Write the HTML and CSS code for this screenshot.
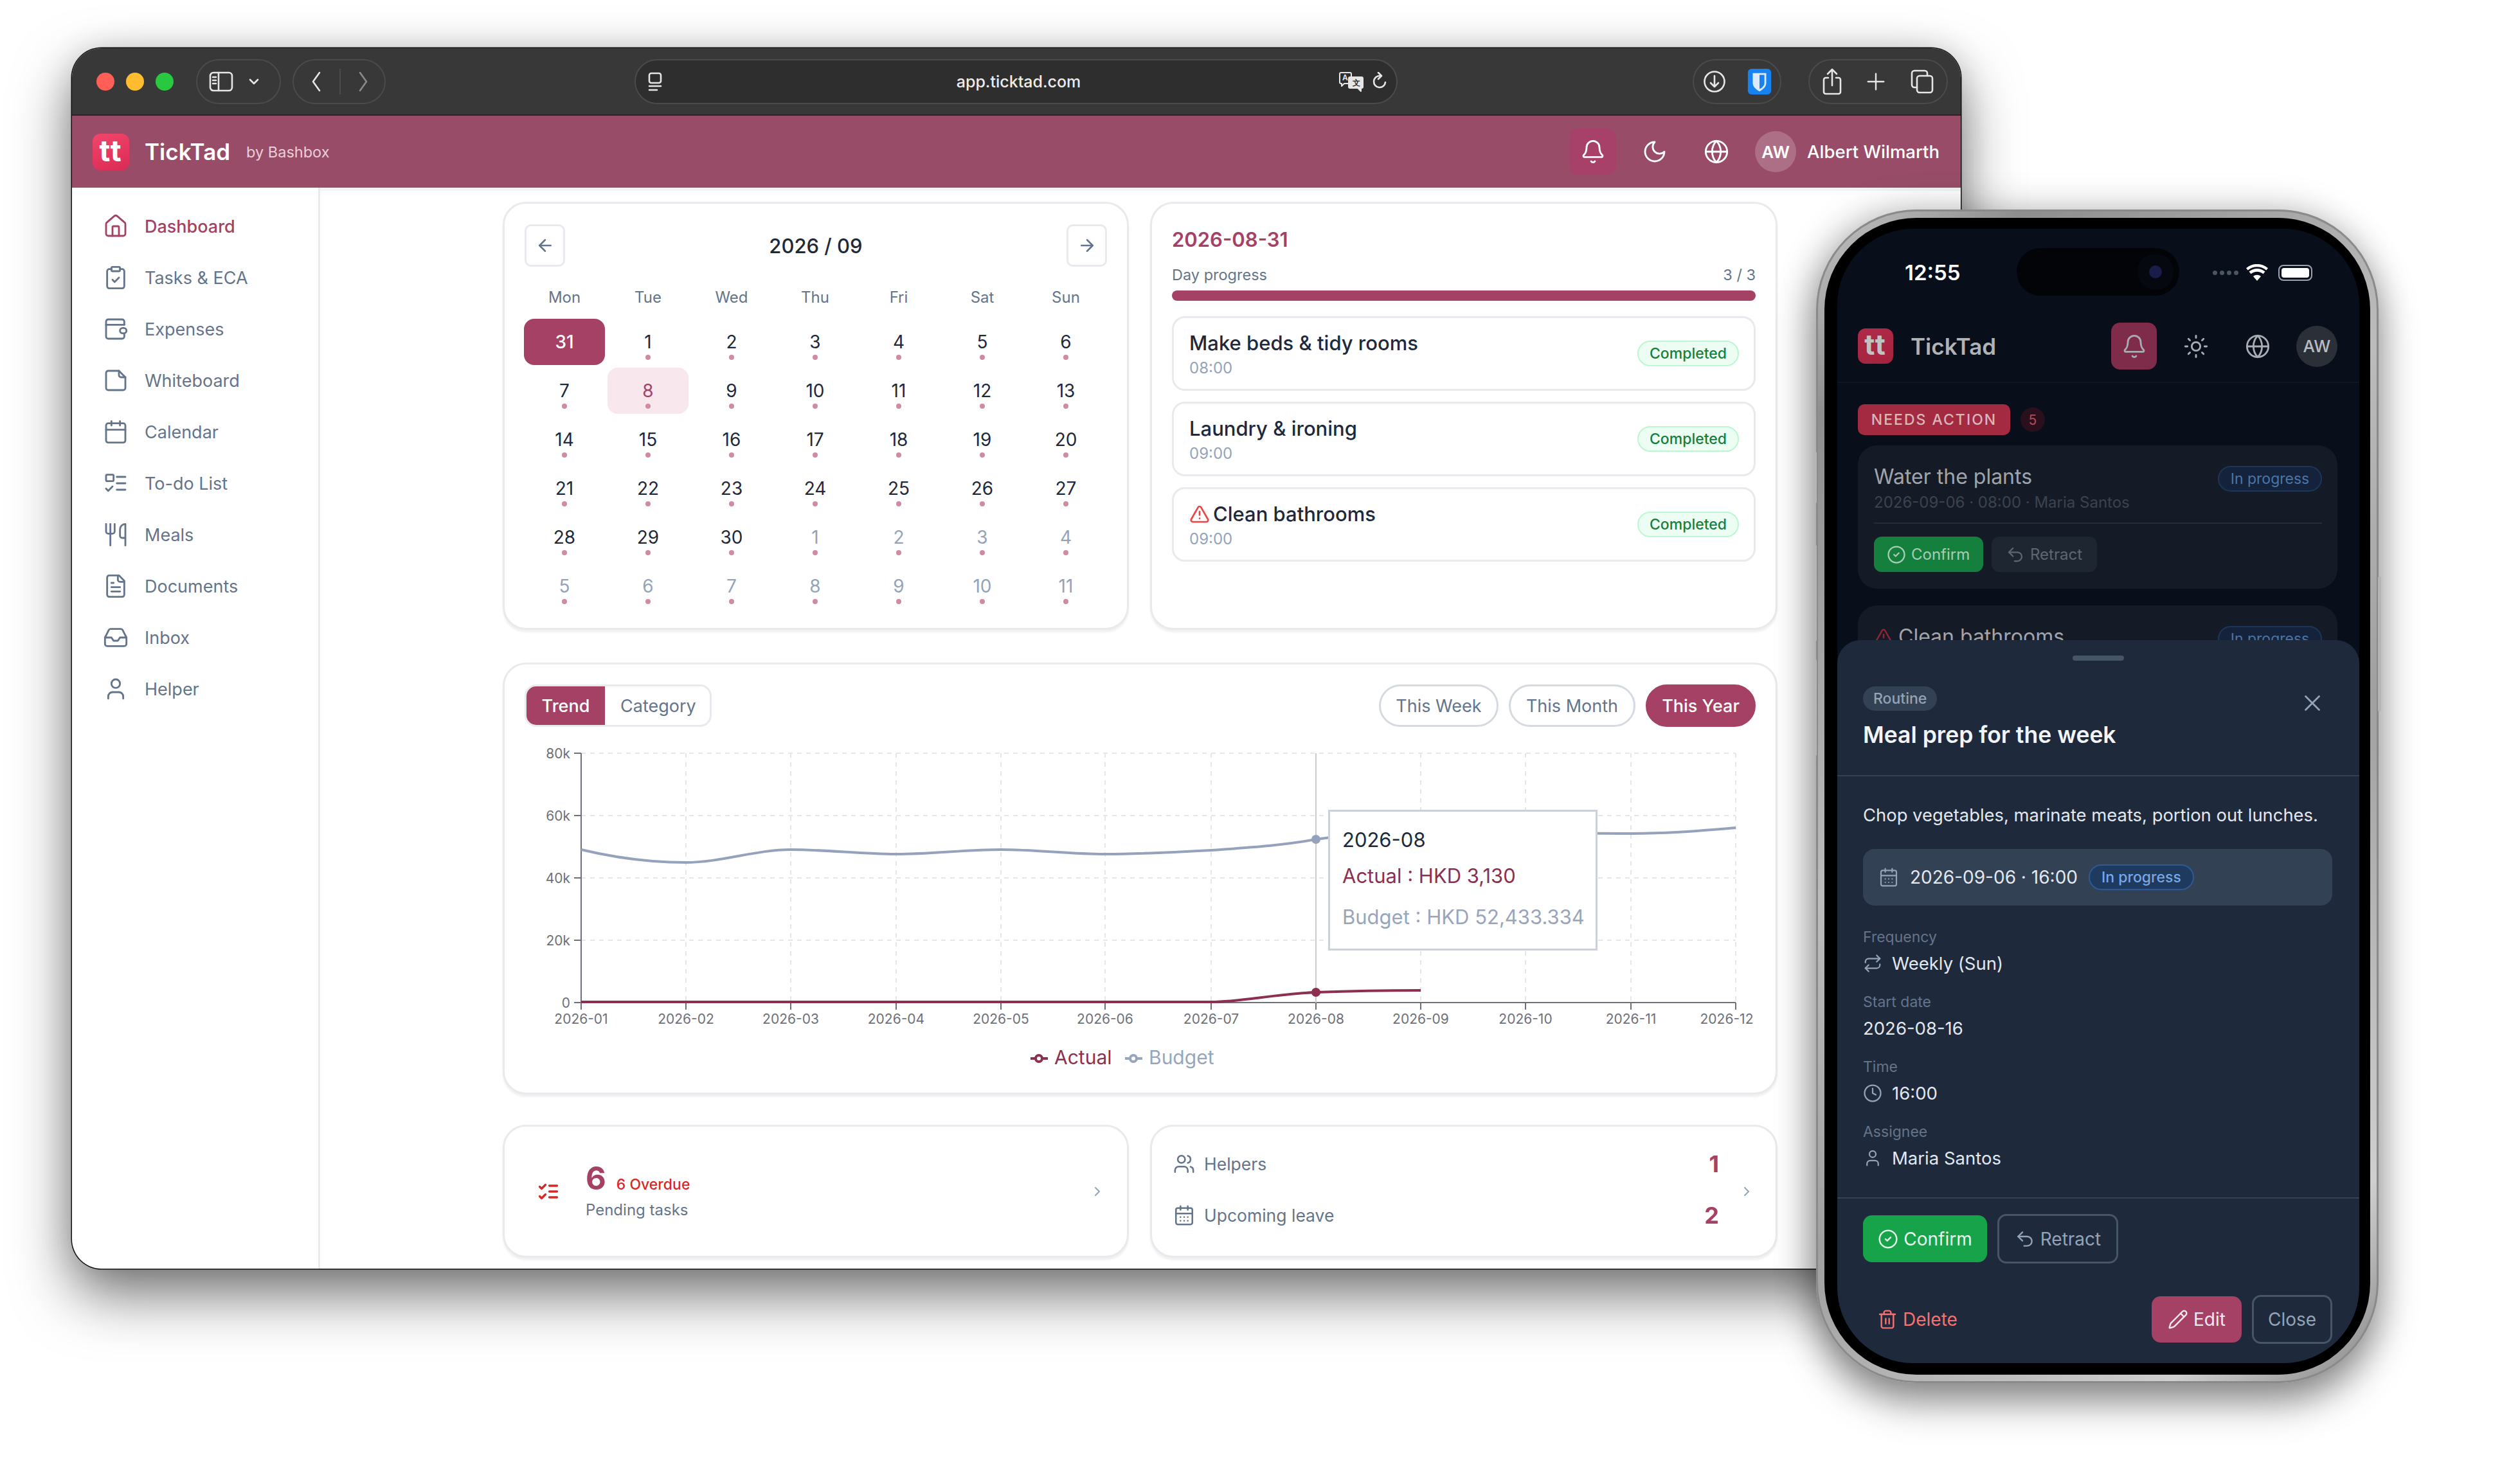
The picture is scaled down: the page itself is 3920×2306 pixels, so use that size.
FILE: index.html
```html
<!DOCTYPE html>
<html lang="en">

<head>
    <meta charset="utf-8">
    <title>TickTad</title>
    <link rel="stylesheet" href="styles.css">
</head>

<body>
    <svg class="sprite" xmlns="http://www.w3.org/2000/svg">
        <symbol id="i-home" viewBox="0 0 24 24"><path d="M15 21v-8a1 1 0 0 0-1-1h-4a1 1 0 0 0-1 1v8"/><path d="M3 10a2 2 0 0 1 .709-1.528l7-5.999a2 2 0 0 1 2.582 0l7 5.999A2 2 0 0 1 21 10v9a2 2 0 0 1-2 2H5a2 2 0 0 1-2-2z"/></symbol>
        <symbol id="i-clip" viewBox="0 0 24 24"><rect width="8" height="4" x="8" y="2" rx="1"/><path d="M16 4h2a2 2 0 0 1 2 2v14a2 2 0 0 1-2 2H6a2 2 0 0 1-2-2V6a2 2 0 0 1 2-2h2"/><path d="m9 14 2 2 4-4"/></symbol>
        <symbol id="i-wallet" viewBox="0 0 24 24"><path d="M20 8V5a2 2 0 0 0-2-2H5a2 2 0 0 0-2 2v14a2 2 0 0 0 2 2h13a2 2 0 0 0 2-2v-2"/><path d="M3 8h17"/><rect x="16" y="11" width="6" height="5" rx="2.5"/></symbol>
        <symbol id="i-file" viewBox="0 0 24 24"><path d="M15 3H5a2 2 0 0 0-2 2v14a2 2 0 0 0 2 2h14a2 2 0 0 0 2-2V9Z"/><path d="M15 3v4a2 2 0 0 0 2 2h4"/></symbol>
        <symbol id="i-cal" viewBox="0 0 24 24"><path d="M8 2v4"/><path d="M16 2v4"/><rect width="18" height="18" x="3" y="4" rx="2"/><path d="M3 10h18"/></symbol>
        <symbol id="i-caldays" viewBox="0 0 24 24"><path d="M8 2v4"/><path d="M16 2v4"/><rect width="18" height="18" x="3" y="4" rx="2"/><path d="M3 10h18"/><path d="M8 14h.01M12 14h.01M16 14h.01M8 18h.01M12 18h.01M16 18h.01"/></symbol>
        <symbol id="i-todo" viewBox="0 0 24 24"><rect x="3" y="4" width="7" height="6" rx="1"/><path d="m3 17 2 2 4-4"/><path d="M13 6h8"/><path d="M13 12h8"/><path d="M13 18h8"/></symbol>
        <symbol id="i-meals" viewBox="0 0 24 24"><path d="M3 2v7c0 1.1.9 2 2 2h4a2 2 0 0 0 2-2V2"/><path d="M7 2v20"/><path d="M21 15V2a5 5 0 0 0-5 5v6c0 1.1.9 2 2 2h3Zm0 0v7"/></symbol>
        <symbol id="i-doc" viewBox="0 0 24 24"><path d="M15 2H6a2 2 0 0 0-2 2v16a2 2 0 0 0 2 2h12a2 2 0 0 0 2-2V7Z"/><path d="M14 2v4a2 2 0 0 0 2 2h4"/><path d="M10 9H8"/><path d="M16 13H8"/><path d="M16 17H8"/></symbol>
        <symbol id="i-inbox" viewBox="0 0 24 24"><path d="M22 12h-6l-2 3h-4l-2-3H2"/><path d="M5.45 5.11 2 12v6a2 2 0 0 0 2 2h16a2 2 0 0 0 2-2v-6l-3.45-6.89A2 2 0 0 0 16.76 4H7.24a2 2 0 0 0-1.79 1.11z"/></symbol>
        <symbol id="i-user" viewBox="0 0 24 24"><path d="M19 21v-2a4 4 0 0 0-4-4H9a4 4 0 0 0-4 4v2"/><circle cx="12" cy="7" r="4"/></symbol>
        <symbol id="i-users" viewBox="0 0 24 24"><path d="M16 21v-2a4 4 0 0 0-4-4H6a4 4 0 0 0-4 4v2"/><circle cx="9" cy="7" r="4"/><path d="M22 21v-2a4 4 0 0 0-3-3.87"/><path d="M16 3.13a4 4 0 0 1 0 7.75"/></symbol>
        <symbol id="i-bell" viewBox="0 0 24 24"><path d="M10.268 21a2 2 0 0 0 3.464 0"/><path d="M3.262 15.326A1 1 0 0 0 4 17h16a1 1 0 0 0 .74-1.673C19.41 13.956 18 12.499 18 8A6 6 0 0 0 6 8c0 4.499-1.411 5.956-2.738 7.326"/></symbol>
        <symbol id="i-moon" viewBox="0 0 24 24"><path d="M12 3a6 6 0 0 0 9 9 9 9 0 1 1-9-9Z"/></symbol>
        <symbol id="i-globe" viewBox="0 0 24 24"><circle cx="12" cy="12" r="10"/><path d="M12 2a14.5 14.5 0 0 0 0 20 14.5 14.5 0 0 0 0-20"/><path d="M2 12h20"/></symbol>
        <symbol id="i-sun" viewBox="0 0 24 24"><circle cx="12" cy="12" r="4"/><path d="M12 2v2M12 20v2M4.93 4.93l1.41 1.41M17.66 17.66l1.41 1.41M2 12h2M20 12h2M6.34 17.66l-1.41 1.41M19.07 4.93l-1.41 1.41"/></symbol>
        <symbol id="i-left" viewBox="0 0 24 24"><path d="m12 19-7-7 7-7"/><path d="M19 12H5"/></symbol>
        <symbol id="i-right" viewBox="0 0 24 24"><path d="M5 12h14"/><path d="m12 5 7 7-7 7"/></symbol>
        <symbol id="i-chev" viewBox="0 0 24 24"><path d="m9 18 6-6-6-6"/></symbol>
        <symbol id="i-check" viewBox="0 0 24 24"><circle cx="12" cy="12" r="10"/><path d="m9 12 2 2 4-4"/></symbol>
        <symbol id="i-undo" viewBox="0 0 24 24"><path d="M9 14 4 9l5-5"/><path d="M4 9h10.5a5.5 5.5 0 0 1 0 11H11"/></symbol>
        <symbol id="i-repeat" viewBox="0 0 24 24"><path d="m17 2 4 4-4 4"/><path d="M3 11v-1a4 4 0 0 1 4-4h14"/><path d="m7 22-4-4 4-4"/><path d="M21 13v1a4 4 0 0 1-4 4H3"/></symbol>
        <symbol id="i-clock" viewBox="0 0 24 24"><circle cx="12" cy="12" r="10"/><path d="M12 6v6l4 2"/></symbol>
        <symbol id="i-trash" viewBox="0 0 24 24"><path d="M3 6h18"/><path d="M19 6v14c0 1-1 2-2 2H7c-1 0-2-1-2-2V6"/><path d="M8 6V4c0-1 1-2 2-2h4c1 0 2 1 2 2v2"/><path d="M10 11v6"/><path d="M14 11v6"/></symbol>
        <symbol id="i-pen" viewBox="0 0 24 24"><path d="M21.174 6.812a1 1 0 0 0-3.986-3.987L3.842 16.174a2 2 0 0 0-.5.83l-1.321 4.352a.5.5 0 0 0 .623.622l4.353-1.32a2 2 0 0 0 .83-.497z"/><path d="m15 5 4 4"/></symbol>
        <symbol id="i-x" viewBox="0 0 24 24"><path d="M18 6 6 18"/><path d="m6 6 12 12"/></symbol>
        <symbol id="i-warn" viewBox="0 0 24 24"><path d="m21.73 18-8-14a2 2 0 0 0-3.48 0l-8 14A2 2 0 0 0 4 21h16a2 2 0 0 0 1.73-3"/><path d="M12 9v4"/><path d="M12 17h.01"/></symbol>
        <symbol id="i-checks" viewBox="0 0 24 24"><path d="m3 17 2 2 4-4"/><path d="m3 7 2 2 4-4"/><path d="M13 6h8"/><path d="M13 12h8"/><path d="M13 18h8"/></symbol>
    </svg>

    <!-- browser window -->
    <div class="window">
        <div class="toolbar">
            <div class="lights"><i class="red"></i><i class="yellow"></i><i class="green"></i></div>
            <div class="tgroup tg-side">
                <svg class="tic" viewBox="0 0 38 32"><rect x="2" y="2" width="34" height="28" rx="5"/><path d="M15 2v28M6 9h5M6 14h5M6 19h5"/></svg>
                <svg class="tic-sm" viewBox="0 0 24 24"><path d="m6 9 6 6 6-6"/></svg>
            </div>
            <div class="tgroup tg-nav">
                <svg class="tic-nav" viewBox="0 0 20 36"><path d="M15 4 5 18l10 14"/></svg>
                <span class="tsep"></span>
                <svg class="tic-nav dim" viewBox="0 0 20 36"><path d="m5 4 10 14L5 32"/></svg>
            </div>
            <div class="urlbar">
                <svg class="url-page" viewBox="0 0 24 30"><rect x="3" y="2" width="18" height="15" rx="3"/><path d="M3 22h18M3 28h12"/></svg>
                <span class="url-text">app.ticktad.com</span>
                <div class="url-right">
                    <svg class="url-trans" viewBox="0 0 40 32"><path d="M4 2h14a2 2 0 0 1 2 2v13a2 2 0 0 1-2 2H9l-4 4v-4H4a2 2 0 0 1-2-2V4a2 2 0 0 1 2-2Z"/><path class="solid" d="M18 9h18a2 2 0 0 1 2 2v13a2 2 0 0 1-2 2h-1v5l-5-5H18a2 2 0 0 1-2-2V11a2 2 0 0 1 2-2Z"/><text x="6" y="14" class="trans-a">A</text><text x="22" y="22" class="trans-b">文</text></svg>
                    <svg class="url-reload" viewBox="0 0 24 30"><path d="M12 6a9 9 0 1 0 9 10"/><path d="m10 1 5 5-5 5"/></svg>
                </div>
            </div>
            <div class="tgroup tg-ext">
                <svg class="tic-dl" viewBox="0 0 36 36"><circle cx="18" cy="18" r="15.5"/><path d="M18 9v17M12 20l6 6 6-6"/></svg>
                <svg class="tic-bw" viewBox="0 0 38 42"><rect width="38" height="42" rx="6" fill="#1683f0"/><path d="M8 7h22v16c0 7-6 11-11 14-5-3-11-7-11-14Z" fill="#dbeafe"/><path d="M19 10h8v13c0 5-4 8-8 10Z" fill="#1683f0"/></svg>
            </div>
            <div class="tgroup tg-tabs">
                <svg class="tic-share" viewBox="0 0 32 42"><path d="M10 15H6a3 3 0 0 0-3 3v19a3 3 0 0 0 3 3h20a3 3 0 0 0 3-3V18a3 3 0 0 0-3-3h-4"/><path d="M16 27V3M9 9l7-7 7 7"/></svg>
                <svg class="tic-plus" viewBox="0 0 32 32"><path d="M16 3v26M3 16h26"/></svg>
                <svg class="tic-copy" viewBox="0 0 36 38"><rect x="10" y="10" width="24" height="26" rx="4"/><path d="M10 28H6a4 4 0 0 1-4-4V6a4 4 0 0 1 4-4h16a4 4 0 0 1 4 4v4"/></svg>
            </div>
        </div>

        <header class="appbar">
            <div class="logo">tt</div>
            <span class="brand">TickTad</span>
            <span class="by">by Bashbox</span>
            <div class="appbar-right">
                <span class="iconbtn bell-on"><svg class="ic"><use href="#i-bell"/></svg></span>
                <span class="iconbtn plain"><svg class="ic"><use href="#i-moon"/></svg></span>
                <span class="iconbtn plain"><svg class="ic"><use href="#i-globe"/></svg></span>
                <span class="avatar">AW</span>
                <span class="uname">Albert Wilmarth</span>
            </div>
        </header>

        <div class="app-body">
            <nav class="sidebar">
                <a class="navitem active"><svg class="ic"><use href="#i-home"/></svg>Dashboard</a>
                <a class="navitem"><svg class="ic"><use href="#i-clip"/></svg>Tasks &amp; ECA</a>
                <a class="navitem"><svg class="ic"><use href="#i-wallet"/></svg>Expenses</a>
                <a class="navitem"><svg class="ic"><use href="#i-file"/></svg>Whiteboard</a>
                <a class="navitem"><svg class="ic"><use href="#i-cal"/></svg>Calendar</a>
                <a class="navitem"><svg class="ic"><use href="#i-todo"/></svg>To-do List</a>
                <a class="navitem"><svg class="ic"><use href="#i-meals"/></svg>Meals</a>
                <a class="navitem"><svg class="ic"><use href="#i-doc"/></svg>Documents</a>
                <a class="navitem"><svg class="ic"><use href="#i-inbox"/></svg>Inbox</a>
                <a class="navitem"><svg class="ic"><use href="#i-user"/></svg>Helper</a>
            </nav>

            <main class="content">
                <div class="grid-row top-row">
                    <section class="card cal-card">
                        <div class="cal-head">
                            <button class="navbtn"><svg class="ic-sm"><use href="#i-left"/></svg></button>
                            <h2>2026 / 09</h2>
                            <button class="navbtn"><svg class="ic-sm"><use href="#i-right"/></svg></button>
                        </div>
                        <div class="weekdays">
                            <span>Mon</span><span>Tue</span><span>Wed</span><span>Thu</span><span>Fri</span><span>Sat</span><span>Sun</span>
                        </div>
                        <div class="days">
                            <div class="day selected"><b>31</b></div>
                            <div class="day"><b>1</b><i></i></div>
                            <div class="day"><b>2</b><i></i></div>
                            <div class="day"><b>3</b><i></i></div>
                            <div class="day"><b>4</b><i></i></div>
                            <div class="day"><b>5</b><i></i></div>
                            <div class="day"><b>6</b><i></i></div>
                            <div class="day"><b>7</b><i></i></div>
                            <div class="day today"><b>8</b><i></i></div>
                            <div class="day"><b>9</b><i></i></div>
                            <div class="day"><b>10</b><i></i></div>
                            <div class="day"><b>11</b><i></i></div>
                            <div class="day"><b>12</b><i></i></div>
                            <div class="day"><b>13</b><i></i></div>
                            <div class="day"><b>14</b><i></i></div>
                            <div class="day"><b>15</b><i></i></div>
                            <div class="day"><b>16</b><i></i></div>
                            <div class="day"><b>17</b><i></i></div>
                            <div class="day"><b>18</b><i></i></div>
                            <div class="day"><b>19</b><i></i></div>
                            <div class="day"><b>20</b><i></i></div>
                            <div class="day"><b>21</b><i></i></div>
                            <div class="day"><b>22</b><i></i></div>
                            <div class="day"><b>23</b><i></i></div>
                            <div class="day"><b>24</b><i></i></div>
                            <div class="day"><b>25</b><i></i></div>
                            <div class="day"><b>26</b><i></i></div>
                            <div class="day"><b>27</b><i></i></div>
                            <div class="day"><b>28</b><i></i></div>
                            <div class="day"><b>29</b><i></i></div>
                            <div class="day"><b>30</b><i></i></div>
                            <div class="day muted"><b>1</b><i></i></div>
                            <div class="day muted"><b>2</b><i></i></div>
                            <div class="day muted"><b>3</b><i></i></div>
                            <div class="day muted"><b>4</b><i></i></div>
                            <div class="day muted"><b>5</b><i></i></div>
                            <div class="day muted"><b>6</b><i></i></div>
                            <div class="day muted"><b>7</b><i></i></div>
                            <div class="day muted"><b>8</b><i></i></div>
                            <div class="day muted"><b>9</b><i></i></div>
                            <div class="day muted"><b>10</b><i></i></div>
                            <div class="day muted"><b>11</b><i></i></div>
                        </div>
                    </section>

                    <section class="card day-card">
                        <h3 class="day-date">2026-08-31</h3>
                        <div class="progress-label"><span>Day progress</span><span>3 / 3</span></div>
                        <div class="progress"></div>
                        <div class="task">
                            <div><p class="task-title">Make beds &amp; tidy rooms</p><p class="task-time">08:00</p></div>
                            <span class="pill-done">Completed</span>
                        </div>
                        <div class="task">
                            <div><p class="task-title">Laundry &amp; ironing</p><p class="task-time">09:00</p></div>
                            <span class="pill-done">Completed</span>
                        </div>
                        <div class="task">
                            <div><p class="task-title"><svg class="ic-warn"><use href="#i-warn"/></svg>Clean bathrooms</p><p class="task-time">09:00</p></div>
                            <span class="pill-done">Completed</span>
                        </div>
                    </section>
                </div>

                <section class="card chart-card">
                    <div class="chart-head">
                        <div class="segment"><span class="seg on">Trend</span><span class="seg">Category</span></div>
                        <div class="ranges">
                            <span class="range r-week">This Week</span>
                            <span class="range r-month">This Month</span>
                            <span class="range r-year on">This Year</span>
                        </div>
                    </div>
                    <div class="chart-wrap">
                        <svg class="chart" viewBox="816 1150 1915 520" width="1915" height="520">
                            <g class="gridlines">
                                <path d="M904 1172H2700M904 1269H2700M904 1366H2700M904 1463H2700"/>
                                <path d="M1067 1172V1560M1230 1172V1560M1394 1172V1560M1557 1172V1560M1719 1172V1560M1884 1172V1560M2210 1172V1560M2373 1172V1560M2537 1172V1560M2700 1172V1560"/>
                            </g>
                            <path class="axis" d="M904 1172V1560H2700M893 1172H904M893 1269H904M893 1366H904M893 1463H904M893 1560H904"/>
                            <path class="axis" d="M904 1560v11M1067 1560v11M1230 1560v11M1394 1560v11M1557 1560v11M1719 1560v11M1884 1560v11M2047 1560v11M2210 1560v11M2373 1560v11M2537 1560v11M2700 1560v11"/>
                            <g class="ylabels">
                                <text x="887" y="1172">80k</text>
                                <text x="887" y="1269">60k</text>
                                <text x="887" y="1366">40k</text>
                                <text x="887" y="1463">20k</text>
                                <text x="887" y="1560">0</text>
                            </g>
                            <g class="xlabels">
                                <text x="904" y="1585">2026-01</text>
                                <text x="1067" y="1585">2026-02</text>
                                <text x="1230" y="1585">2026-03</text>
                                <text x="1394" y="1585">2026-04</text>
                                <text x="1557" y="1585">2026-05</text>
                                <text x="1719" y="1585">2026-06</text>
                                <text x="1884" y="1585">2026-07</text>
                                <text x="2047" y="1585">2026-08</text>
                                <text x="2210" y="1585">2026-09</text>
                                <text x="2373" y="1585">2026-10</text>
                                <text x="2537" y="1585">2026-11</text>
                                <text x="2686" y="1585">2026-12</text>
                            </g>
                            <path class="crosshair" d="M2047 1172V1560"/>
                            <path class="line budget" d="M904 1322C958 1335 1013 1342 1067 1342C1121 1342 1176 1322 1230 1322C1285 1322 1340 1329 1394 1329C1448 1329 1503 1322 1557 1322C1611 1322 1665 1329 1719 1329C1774 1329 1829 1326 1884 1323C1938 1319 1993 1316 2047 1306C2100 1298 2155 1293 2210 1292C2264 1291 2320 1294 2373 1295C2428 1296 2482 1297 2537 1297C2592 1297 2645 1293 2700 1288"/>
                            <path class="line actual" d="M904 1559H1884C1930 1559 1980 1547 2047 1544C2100 1542 2155 1541 2210 1541"/>
                            <circle cx="2047" cy="1306" r="7" class="pt-budget"/>
                            <circle cx="2047" cy="1544" r="7" class="pt-actual"/>
                            <g class="legend">
                                <path class="leg-a" d="M1603 1647H1630"/><circle cx="1616" cy="1647" r="5" class="leg-a leg-dot"/>
                                <text x="1640" y="1645" class="leg-actual">Actual</text>
                                <path class="leg-b" d="M1750 1647H1777"/><circle cx="1763" cy="1647" r="5" class="leg-b leg-dot"/>
                                <text x="1787" y="1645" class="leg-budget">Budget</text>
                            </g>
                        </svg>
                        <div class="tooltip">
                            <p class="tt-date">2026-08</p>
                            <p class="tt-actual">Actual : HKD 3,130</p>
                            <p class="tt-budget">Budget : HKD 52,433.334</p>
                        </div>
                    </div>
                </section>

                <div class="grid-row bottom-row">
                    <section class="card pending">
                        <svg class="ic-checks"><use href="#i-checks"/></svg>
                        <div class="pending-text">
                            <p class="pending-top"><b>6</b><span>6 Overdue</span></p>
                            <p class="pending-sub">Pending tasks</p>
                        </div>
                        <svg class="chev"><use href="#i-chev"/></svg>
                    </section>
                    <section class="card stats">
                        <div class="stat-list">
                            <div class="stat"><svg class="ic-stat"><use href="#i-users"/></svg><span>Helpers</span><b>1</b></div>
                            <div class="stat"><svg class="ic-stat"><use href="#i-caldays"/></svg><span>Upcoming leave</span><b>2</b></div>
                        </div>
                        <svg class="chev"><use href="#i-chev"/></svg>
                    </section>
                </div>
            </main>
        </div>
    </div>

    <!-- phone -->
    <div class="phone">
        <span class="side-btn sb-1"></span>
        <span class="side-btn sb-2"></span>
        <span class="side-btn sb-3"></span>
        <span class="side-btn sb-4"></span>
        <div class="bezel">
            <div class="screen">
                <div class="status">
                    <span class="clock">12:55</span>
                    <div class="status-right">
                        <span class="signal"><i></i><i></i><i></i><i></i></span>
                        <svg class="wifi" viewBox="0 0 34 26"><path d="M17 26 11 19a9 9 0 0 1 12 0ZM7.500 15.200 4.500 11.600a19 19 0 0 1 25 0l-3 3.600a14.500 14.500 0 0 0-19 0ZM2.700 9.500 0 6.200a26 26 0 0 1 34 0l-2.700 3.300a22 22 0 0 0-28.600 0Z"/></svg>
                        <span class="battery"><i></i></span>
                    </div>
                </div>
                <div class="island"><span class="island-cam"></span></div>

                <div class="m-head">
                    <div class="logo m-logo">tt</div>
                    <span class="m-brand">TickTad</span>
                    <div class="m-head-right">
                        <span class="m-btn m-bell"><svg class="ic"><use href="#i-bell"/></svg></span>
                        <span class="m-btn"><svg class="ic"><use href="#i-sun"/></svg></span>
                        <span class="m-btn"><svg class="ic"><use href="#i-globe"/></svg></span>
                        <span class="m-avatar">AW</span>
                    </div>
                </div>

                <div class="m-list">
                    <div class="m-section"><span class="needs">NEEDS ACTION</span><span class="needs-count">5</span></div>
                    <div class="m-card">
                        <div class="m-card-top"><p class="m-title">Water the plants</p><span class="m-pill">In progress</span></div>
                        <p class="m-meta">2026-09-06 · 08:00 · Maria Santos</p>
                        <div class="m-actions">
                            <span class="m-confirm"><svg class="ic-btn"><use href="#i-check"/></svg>Confirm</span>
                            <span class="m-retract"><svg class="ic-btn"><use href="#i-undo"/></svg>Retract</span>
                        </div>
                    </div>
                    <div class="m-card">
                        <div class="m-card-top"><p class="m-title"><svg class="ic-mwarn"><use href="#i-warn"/></svg>Clean bathrooms</p><span class="m-pill">In progress</span></div>
                    </div>
                </div>

                <div class="sheet">
                    <span class="handle"></span>
                    <div class="sheet-head">
                        <span class="routine">Routine</span>
                        <h2>Meal prep for the week</h2>
                        <svg class="sheet-x"><use href="#i-x"/></svg>
                    </div>
                    <div class="sheet-body">
                        <p class="desc">Chop vegetables, marinate meats, portion out lunches.</p>
                        <div class="when">
                            <svg class="ic-when"><use href="#i-caldays"/></svg>
                            <span>2026-09-06 · 16:00</span>
                            <span class="when-pill">In progress</span>
                        </div>
                        <div class="field first"><label>Frequency</label><p><svg class="ic-field"><use href="#i-repeat"/></svg>Weekly (Sun)</p></div>
                        <div class="field"><label>Start date</label><p>2026-08-16</p></div>
                        <div class="field"><label>Time</label><p><svg class="ic-field"><use href="#i-clock"/></svg>16:00</p></div>
                        <div class="field"><label>Assignee</label><p><svg class="ic-field"><use href="#i-user"/></svg>Maria Santos</p></div>
                    </div>
                    <div class="sheet-foot">
                        <div class="foot-row">
                            <span class="s-btn s-confirm"><svg class="ic-btn2"><use href="#i-check"/></svg>Confirm</span>
                            <span class="s-btn s-retract"><svg class="ic-btn2"><use href="#i-undo"/></svg>Retract</span>
                        </div>
                        <div class="foot-row foot-bottom">
                            <span class="s-delete"><svg class="ic-btn2"><use href="#i-trash"/></svg>Delete</span>
                            <span class="s-btn s-edit"><svg class="ic-btn2"><use href="#i-pen"/></svg>Edit</span>
                            <span class="s-btn s-close">Close</span>
                        </div>
                    </div>
                </div>
            </div>
        </div>
    </div>
</body>

</html>
```

FILE: styles.css
```css
* {
    box-sizing: border-box;
}

html,
body {
    margin: 0;
    padding: 0;
    width: 3920px;
    height: 2306px;
    overflow: hidden;
    background: #fff;
    font-family: Inter, "Noto Sans", sans-serif;
    color: #1e293b;
}

p,
h2,
h3 {
    margin: 0;
    font-weight: 400;
}

.sprite {
    position: absolute;
    width: 0;
    height: 0;
}

.sprite symbol,
svg use {
    fill: none;
    stroke: currentColor;
    stroke-linecap: round;
    stroke-linejoin: round;
}

/* window */
.window {
    position: absolute;
    left: 112px;
    top: 75px;
    width: 2938px;
    height: 1899px;
    border-radius: 46px;
    overflow: hidden;
    background: #fff;
    box-shadow: 0 0 0 1.5px #111, 0 40px 90px rgba(0, 0, 0, .55), 0 0 50px rgba(0, 0, 0, .12);
}

.toolbar {
    display: flex;
    align-items: center;
    height: 105px;
    padding-left: 38px;
    background: #383838;
    border-bottom: 2px solid #262626;
}

.lights {
    display: flex;
    gap: 18px;
}

.lights i {
    width: 28px;
    height: 28px;
    border-radius: 50%;
}

.lights .red {
    background: #ff5f57;
}

.lights .yellow {
    background: #febc2e;
}

.lights .green {
    background: #28c840;
}

.tgroup {
    display: flex;
    align-items: center;
    height: 70px;
    border: 2px solid #4b4b4b;
    border-radius: 35px;
    color: #e6e6e6;
}

.tgroup svg,
.urlbar svg {
    fill: none;
    stroke: currentColor;
    stroke-width: 2.6;
    stroke-linecap: round;
    stroke-linejoin: round;
}

.tg-side {
    width: 132px;
    margin-left: 35px;
    padding-left: 18px;
    gap: 20px;
}

.tic {
    width: 38px;
    height: 32px;
}

.tic-sm {
    width: 24px;
    height: 24px;
}

.tg-nav {
    width: 145px;
    margin-left: 18px;
    padding-left: 25px;
}

.tic-nav {
    width: 20px;
    height: 36px;
}

.tic-nav.dim {
    color: #8a8a8a;
}

.tsep {
    width: 2px;
    height: 40px;
    margin: 0 25px 0 26px;
    background: #4b4b4b;
}

.urlbar {
    display: flex;
    align-items: center;
    width: 1187px;
    height: 70px;
    margin-left: 387px;
    padding: 0 14px 0 18px;
    border: 2px solid #4b4b4b;
    border-radius: 35px;
    background: #2e2e2e;
    color: #e6e6e6;
}

.url-page {
    width: 24px;
    height: 30px;
}

.url-text {
    flex: 1;
    padding-left: 56px;
    text-align: center;
    font-size: 25px;
    font-weight: 500;
    color: #ececec;
}

.url-right {
    display: flex;
    align-items: center;
    gap: 12px;
}

.url-trans {
    width: 40px;
    height: 32px;
}

.urlbar .url-trans {
    stroke-width: 2;
}

.url-trans .solid {
    fill: #e6e6e6;
}

.url-trans text {
    stroke: none;
    fill: #e6e6e6;
    font-size: 12px;
    font-weight: 600;
}

.url-trans .trans-b {
    fill: #2e2e2e;
}

.url-reload {
    width: 24px;
    height: 30px;
}

.tg-ext {
    width: 138px;
    margin-left: 459px;
    padding-left: 14px;
    gap: 33px;
}

.tic-dl {
    width: 36px;
    height: 36px;
}

.tgroup .tic-bw {
    width: 38px;
    height: 40px;
    stroke: none;
}

.tg-tabs {
    width: 217px;
    margin-left: 42px;
    padding-left: 19px;
}

.tic-share {
    width: 32px;
    height: 42px;
}

.tic-plus {
    width: 30px;
    height: 30px;
    margin-left: 37px;
}

.tic-copy {
    width: 36px;
    height: 38px;
    margin-left: 39px;
}

/* app header */
.appbar {
    display: flex;
    align-items: center;
    height: 112px;
    padding-left: 32px;
    background: #984c68;
    color: #fff;
}

.logo {
    display: flex;
    align-items: center;
    justify-content: center;
    width: 57px;
    height: 57px;
    border-radius: 12px;
    background: linear-gradient(160deg, #f2466a, #d92a55);
    font-size: 46px;
    font-weight: 700;
    letter-spacing: 2px;
    line-height: 1;
    color: #fff;
    padding-bottom: 5px;
}

.brand {
    margin-left: 24px;
    font-size: 35px;
    font-weight: 600;
}

.by {
    margin-left: 25px;
    font-size: 23.500px;
    color: #eacfd9;
}

.appbar-right {
    display: flex;
    align-items: center;
    margin-left: auto;
}

.iconbtn {
    display: flex;
    align-items: center;
    justify-content: center;
    width: 72px;
    height: 72px;
    border-radius: 14px;
}

.bell-on {
    background: #a8416a;
}

.plain {
    margin-left: 24px;
}

.ic {
    width: 40px;
    height: 40px;
    stroke-width: 1.7;
}

.avatar {
    display: flex;
    align-items: center;
    justify-content: center;
    width: 64px;
    height: 64px;
    margin-left: 24px;
    border-radius: 50%;
    background: rgba(255, 255, 255, .2);
    font-size: 26px;
    font-weight: 600;
}

.uname {
    margin: 0 33px 0 17px;
    font-size: 27.500px;
    font-weight: 500;
}

/* sidebar */
.app-body {
    display: flex;
    height: 1682px;
}

.sidebar {
    flex: none;
    width: 386px;
    padding: 20px 0 0 48px;
    border-right: 3px solid #e8eaee;
}

.navitem {
    display: flex;
    align-items: center;
    gap: 25px;
    height: 80px;
    font-size: 27px;
    font-weight: 400;
    color: #64748b;
}

.navitem.active {
    color: #a54165;
    font-weight: 500;
}

/* main column */
.content {
    flex: 1;
    padding-top: 17px;
    border-top: 5px solid #f3f4f6;
}

.grid-row {
    display: grid;
    grid-template-columns: 974px 976px;
    column-gap: 33px;
    width: 1983px;
    margin-left: 284px;
}

.top-row {
    height: 666px;
}

.card {
    background: #fff;
    border: 3px solid #e8eaee;
    border-radius: 36px;
    box-shadow: 0 4px 3px rgba(0, 0, 0, .06);
}

/* calendar */
.cal-card {
    padding: 32px 30px 0;
}

.cal-head {
    display: flex;
    align-items: center;
    justify-content: space-between;
    height: 66px;
    padding: 0 1px;
}

.cal-head h2 {
    font-size: 31px;
    font-weight: 500;
}

.navbtn {
    display: flex;
    align-items: center;
    justify-content: center;
    width: 63px;
    height: 66px;
    padding: 0;
    background: #fff;
    border: 3px solid #e8eaee;
    border-radius: 10px;
    color: #64748b;
}

.ic-sm {
    width: 30px;
    height: 30px;
    stroke-width: 2;
}

.weekdays {
    display: grid;
    grid-template-columns: repeat(7, 126px);
    column-gap: 4px;
    margin-top: 33px;
    line-height: 30px;
    font-size: 24px;
    font-weight: 400;
    text-align: center;
    color: #64748b;
}

.days {
    display: grid;
    grid-template-columns: repeat(7, 126px);
    grid-auto-rows: 72px;
    gap: 4px;
    margin-top: 18px;
}

.day {
    display: flex;
    flex-direction: column;
    align-items: center;
    padding-top: 18px;
    border-radius: 16px;
    font-size: 28px;
    color: #1e293b;
}

.day b {
    font-weight: 400;
    line-height: 36px;
}

.day i {
    width: 8px;
    height: 8px;
    margin-top: 2px;
    border-radius: 50%;
    background: #d08aa3;
}

.day.selected {
    background: #a54165;
    color: #fff;
}

.day.selected b {
    font-weight: 500;
}

.day.today {
    background: #f8e7ed;
    color: #a54165;
}

.day.muted {
    color: #94a3b8;
}

/* day panel */
.day-card {
    padding: 36px 31px 0;
}

.day-date {
    line-height: 40px;
    font-size: 31px;
    font-weight: 600;
    color: #a54165;
}

.progress-label {
    display: flex;
    justify-content: space-between;
    margin-top: 20px;
    line-height: 30px;
    font-size: 23.500px;
    font-weight: 400;
    color: #64748b;
}

.progress {
    height: 16px;
    margin-top: 9px;
    border-radius: 8px;
    background: #a54165;
}

.task {
    display: flex;
    align-items: center;
    justify-content: space-between;
    height: 116px;
    margin-top: 17px;
    padding: 2px 23px 0 24px;
    border: 3px solid #e8eaee;
    border-radius: 20px;
}

.progress + .task {
    margin-top: 24px;
}

.task-title {
    display: flex;
    align-items: center;
    line-height: 40px;
    font-size: 31px;
    font-weight: 500;
}

.task-time {
    margin-top: 4px;
    line-height: 30px;
    font-size: 24px;
    color: #94a3b8;
}

.ic-warn {
    width: 32px;
    height: 32px;
    margin-right: 5px;
    stroke-width: 2;
    color: #ef4444;
}

.pill-done {
    display: flex;
    align-items: center;
    justify-content: center;
    width: 158px;
    height: 40px;
    margin-top: -2px;
    border: 2px solid #bbf7d0;
    border-radius: 20px;
    background: #ecfdf3;
    font-size: 23px;
    font-weight: 500;
    color: #15803d;
}

/* chart */
.chart-card {
    position: relative;
    width: 1983px;
    height: 672px;
    margin: 51px 0 0 284px;
    padding: 31px 31px 0;
}

.chart-head {
    display: flex;
    justify-content: space-between;
}

.segment {
    display: flex;
    overflow: hidden;
    width: 291px;
    height: 66px;
    border: 3px solid #e8eaee;
    border-radius: 18px;
}

.seg {
    display: flex;
    align-items: center;
    padding: 0 24px;
    font-size: 27px;
    font-weight: 400;
    color: #64748b;
}

.seg.on {
    width: 122px;
    justify-content: center;
    background: #a54165;
    color: #fff;
    font-weight: 500;
}

.ranges {
    display: flex;
    gap: 16px;
}

.range {
    display: flex;
    align-items: center;
    justify-content: center;
    height: 66px;
    border: 3px solid #d5d9e0;
    border-radius: 33px;
    font-size: 27px;
    font-weight: 400;
    color: #64748b;
}

.r-week {
    width: 186px;
}

.r-month {
    width: 197px;
}

.r-year {
    width: 171px;
}

.range.on {
    background: #a54165;
    border-color: #a54165;
    color: #fff;
    font-weight: 500;
}

.chart-wrap {
    position: relative;
    margin-top: 19px;
    height: 520px;
}

.chart {
    display: block;
    font-family: Inter, sans-serif;
}

.gridlines path {
    fill: none;
    stroke: #e6e6e6;
    stroke-width: 2;
    stroke-dasharray: 7 7;
}

.axis {
    fill: none;
    stroke: #6e7079;
    stroke-width: 2;
}

.ylabels text {
    font-size: 21px;
    fill: #6e7079;
    text-anchor: end;
    dominant-baseline: central;
}

.xlabels text {
    font-size: 21px;
    fill: #6e7079;
    text-anchor: middle;
    dominant-baseline: central;
}

.crosshair {
    stroke: #ccc;
    stroke-width: 2;
}

.line {
    fill: none;
    stroke-width: 4;
}

.budget {
    stroke: #94a3bb;
}

.actual {
    stroke: #8c2f50;
}

.pt-budget {
    fill: #94a3bb;
}

.pt-actual {
    fill: #8c2f50;
}

.legend text {
    font-size: 30px;
    dominant-baseline: central;
}

.leg-actual {
    fill: #8c2f50;
}

.leg-budget {
    fill: #98a5bb;
}

.leg-a,
.leg-b {
    stroke-width: 4;
    fill: none;
}

.leg-a {
    stroke: #8c2f50;
}

.leg-b {
    stroke: #98a5bb;
}

.leg-dot {
    fill: #fff;
}

.tooltip {
    position: absolute;
    left: 1250px;
    top: 110px;
    width: 419px;
    height: 219px;
    padding: 0 0 0 19px;
    background: #fff;
    border: 3px solid #ccd0d8;
    font-size: 31px;
}

.tt-date {
    margin-top: 26px;
    line-height: 36px;
    color: #1e293b;
}

.tt-actual {
    margin-top: 20px;
    line-height: 36px;
    color: #8c2f50;
}

.tt-budget {
    margin-top: 28px;
    line-height: 36px;
    color: #98a5bb;
}

/* bottom cards */
.bottom-row {
    height: 207px;
    margin-top: 47px;
}

.pending {
    display: flex;
    align-items: center;
    padding: 0 34px 0 50px;
}

.ic-checks {
    width: 36px;
    height: 36px;
    stroke-width: 2.2;
    color: #dc2626;
}

.pending-text {
    margin-left: 40px;
}

.pending-top {
    display: flex;
    align-items: baseline;
    gap: 16px;
    line-height: 50px;
}

.pending-top b {
    font-size: 49px;
    font-weight: 700;
    color: #a54165;
}

.pending-top span {
    font-size: 23px;
    font-weight: 500;
    color: #dc2626;
}

.pending-sub {
    line-height: 30px;
    font-size: 24px;
    font-weight: 400;
    color: #64748b;
}

.chev {
    flex: none;
    width: 24px;
    height: 24px;
    margin-left: auto;
    stroke-width: 2;
    color: #94a3b8;
}

.stats {
    display: flex;
    align-items: center;
    padding: 0 33px 0 33px;
}

.stat-list {
    flex: 1;
    margin-right: 29px;
    padding-bottom: 5px;
}

.stat {
    display: flex;
    align-items: center;
    height: 80px;
    font-size: 26.500px;
    font-weight: 400;
    color: #64748b;
}

.ic-stat {
    width: 34px;
    height: 34px;
    margin-right: 14px;
    stroke-width: 1.8;
}

.stat b {
    margin-left: auto;
    margin-right: 2px;
    font-size: 36px;
    font-weight: 700;
    color: #a54165;
}

.stats .chev {
    margin-left: 0;
}

/* phone */
.phone {
    position: absolute;
    left: 2825px;
    top: 326px;
    width: 875px;
    height: 1826px;
    padding: 13px;
    border-radius: 156px;
    background: linear-gradient(135deg, #c4c4c4, #8e8e8e 12%, #bcbcbc 40%, #a0a0a0 60%, #cfcfcf 88%, #868686);
    box-shadow: inset 0 0 0 3px #8a8a8a, 0 30px 60px rgba(0, 0, 0, .42), -8px 0 60px rgba(0, 0, 0, .2);
}

.side-btn {
    position: absolute;
    width: 5px;
    border-radius: 2px;
    background: #b5b5b5;
}

.sb-1 {
    left: -4px;
    top: 377px;
    height: 80px;
}

.sb-2 {
    left: -4px;
    top: 522px;
    height: 150px;
}

.sb-3 {
    left: -4px;
    top: 700px;
    height: 150px;
}

.sb-4 {
    right: -4px;
    top: 571px;
    height: 210px;
}

.bezel {
    height: 100%;
    padding: 17px 17px 18px 20px;
    border-radius: 143px;
    background: #000;
}

.screen {
    position: relative;
    overflow: hidden;
    width: 812px;
    height: 1765px;
    border-radius: 118px;
    background: #080e1a;
    color: #a9adb3;
}

.status {
    display: flex;
    justify-content: space-between;
    height: 147px;
    padding: 50px 73px 0 105px;
}

.clock {
    line-height: 36px;
    font-size: 33px;
    font-weight: 600;
    color: #fff;
}

.status-right {
    display: flex;
    align-items: center;
    height: 36px;
}

.signal {
    display: flex;
    gap: 4px;
    margin-right: 12px;
}

.signal i {
    width: 7px;
    height: 7px;
    border-radius: 50%;
    background: #4b5563;
}

.wifi {
    width: 34px;
    height: 26px;
    fill: #fff;
}

.battery {
    position: relative;
    width: 53px;
    height: 25px;
    margin-left: 16px;
    padding: 3px;
    border: 2px solid #9ca3af;
    border-radius: 8px;
}

.battery i {
    display: block;
    height: 100%;
    border-radius: 4px;
    background: #fff;
}

.island {
    position: absolute;
    left: 279px;
    top: 30px;
    width: 253px;
    height: 74px;
    border-radius: 37px;
    background: #030408;
}

.island-cam {
    position: absolute;
    left: 206px;
    top: 27px;
    width: 20px;
    height: 20px;
    border-radius: 50%;
    background: #1a1c4a;
    box-shadow: 0 0 0 18px #060810;
}

.m-head {
    display: flex;
    align-items: center;
    height: 93px;
    padding: 0 34px 20px 32px;
    border-bottom: 2px solid #0e1524;
}

.m-logo {
    width: 55px;
    height: 55px;
    background: linear-gradient(160deg, #b02a48, #a3243f);
    font-size: 44px;
    color: #c2c2c2;
}

.m-brand {
    margin-left: 27px;
    font-size: 35px;
    font-weight: 600;
    color: #b0b2b6;
}

.m-head-right {
    display: flex;
    align-items: center;
    gap: 25px;
    margin-left: auto;
}

.m-btn {
    display: flex;
    align-items: center;
    justify-content: center;
    width: 71px;
    height: 73px;
}

.m-bell {
    border-radius: 14px;
    background: #7e2c49;
}

.m-avatar {
    display: flex;
    align-items: center;
    justify-content: center;
    width: 64px;
    height: 64px;
    border-radius: 50%;
    background: #2b2f38;
    font-size: 26px;
    font-weight: 500;
    color: #b8bbc0;
}

.m-list {
    padding: 33px 34px 0 32px;
}

.m-section {
    display: flex;
    align-items: center;
    gap: 16px;
    height: 48px;
}

.needs {
    display: flex;
    align-items: center;
    justify-content: center;
    width: 237px;
    height: 48px;
    border-radius: 10px;
    background: #a32a40;
    font-size: 23px;
    font-weight: 500;
    letter-spacing: 2px;
    color: #dcb4ba;
}

.needs-count {
    display: flex;
    align-items: center;
    justify-content: center;
    width: 38px;
    height: 38px;
    border-radius: 50%;
    background: #2a101c;
    font-size: 21px;
    color: #b04a5c;
}

.m-card {
    height: 223px;
    margin-top: 16px;
    padding: 26px 24px 0 25px;
    border-radius: 30px;
    background: #151b26;
}

.m-card + .m-card {
    margin-top: 26px;
}

.m-card-top {
    display: flex;
    justify-content: space-between;
}

.m-title {
    display: flex;
    align-items: center;
    line-height: 44px;
    font-size: 32px;
    color: #a0a4ab;
}

.m-pill {
    display: flex;
    align-items: center;
    justify-content: center;
    width: 162px;
    height: 40px;
    margin-top: 6px;
    border: 2px solid #1c3558;
    border-radius: 20px;
    background: #14233b;
    font-size: 23px;
    color: #4a75a8;
}

.ic-mwarn {
    width: 30px;
    height: 30px;
    margin-right: 8px;
    stroke-width: 2;
    color: #8d2733;
}

.m-meta {
    margin-top: 2px;
    padding-bottom: 16px;
    border-bottom: 2px solid #252c38;
    line-height: 30px;
    font-size: 24px;
    color: #3c4350;
}

.m-actions {
    display: flex;
    gap: 13px;
    margin-top: 20px;
}

.m-confirm,
.m-retract {
    display: flex;
    align-items: center;
    gap: 8px;
    height: 55px;
    border-radius: 12px;
    font-size: 24px;
    font-weight: 400;
}

.m-confirm {
    width: 170px;
    padding-left: 20px;
    background: #15803d;
    color: #a7cdb4;
}

.m-retract {
    width: 164px;
    padding-left: 22px;
    background: #1e2631;
    color: #5f6672;
}

.ic-btn {
    width: 30px;
    height: 30px;
    stroke-width: 1.8;
}

/* bottom sheet */
.sheet {
    position: absolute;
    left: 0;
    right: 0;
    top: 640px;
    bottom: 0;
    padding-top: 24px;
    border-radius: 36px 36px 0 0;
    background: #1e293b;
    color: #e2e8f0;
}

.handle {
    display: block;
    width: 80px;
    height: 8px;
    margin: 0 auto;
    border-radius: 4px;
    background: #475569;
}

.sheet-head {
    position: relative;
    margin-top: 40px;
    padding: 0 40px 40px;
    border-bottom: 2px solid #334155;
}

.routine {
    display: inline-block;
    padding: 0 16px;
    line-height: 38px;
    border-radius: 19px;
    background: #334155;
    font-size: 23px;
    font-weight: 500;
    color: #94a3b8;
}

.sheet-head h2 {
    margin-top: 16px;
    line-height: 44px;
    font-size: 35.500px;
    font-weight: 600;
    color: #f1f5f9;
}

.sheet-x {
    position: absolute;
    right: 52px;
    top: 5px;
    width: 42px;
    height: 42px;
    stroke-width: 1.6;
    color: #94a3b8;
}

.sheet-body {
    padding: 42px 42px 0 40px;
}

.desc {
    line-height: 36px;
    font-size: 27.400px;
}

.when {
    display: flex;
    align-items: center;
    height: 88px;
    margin-top: 35px;
    padding-left: 24px;
    border-radius: 18px;
    background: #334155;
    font-size: 28px;
}

.ic-when {
    width: 32px;
    height: 32px;
    margin-right: 17px;
    stroke-width: 1.6;
    color: #94a3b8;
}

.when-pill {
    display: flex;
    align-items: center;
    justify-content: center;
    width: 164px;
    height: 40px;
    margin-left: 17px;
    border: 2px solid #2e5a94;
    border-radius: 20px;
    background: #1e3a5f;
    font-size: 23px;
    font-weight: 500;
    color: #7aa7e0;
}

.field {
    margin-top: 25px;
}

.field.first {
    margin-top: 34px;
}

.field label {
    display: block;
    line-height: 30px;
    font-size: 23px;
    color: #64748b;
}

.field p {
    display: flex;
    align-items: center;
    margin-top: 6px;
    line-height: 40px;
    font-size: 27.500px;
}

.ic-field {
    width: 30px;
    height: 30px;
    margin-right: 15px;
    stroke-width: 1.8;
    color: #94a3b8;
}

.sheet-foot {
    margin-top: 41px;
    padding: 24px 42px 0 40px;
    border-top: 2px solid #334155;
}

.foot-row {
    display: flex;
    align-items: center;
    gap: 16px;
}

.foot-bottom {
    margin-top: 49px;
}

.s-btn {
    display: flex;
    align-items: center;
    justify-content: center;
    gap: 8px;
    border-radius: 14px;
    font-size: 28px;
    font-weight: 400;
}

.s-confirm {
    width: 193px;
    height: 73px;
    background: #16a34a;
    color: #eaf8ef;
}

.s-retract {
    width: 188px;
    height: 77px;
    border: 3px solid #475569;
    color: #94a3b8;
}

.s-delete {
    display: flex;
    align-items: center;
    gap: 8px;
    margin: 0 auto 0 22px;
    font-size: 28px;
    font-weight: 400;
    color: #f87171;
}

.s-edit {
    width: 140px;
    height: 72px;
    background: #a54165;
    color: #f5e9ee;
}

.s-close {
    width: 125px;
    height: 76px;
    border: 3px solid #475569;
    color: #94a3b8;
}

.ic-btn2 {
    width: 32px;
    height: 32px;
    stroke-width: 1.8;
}
```
